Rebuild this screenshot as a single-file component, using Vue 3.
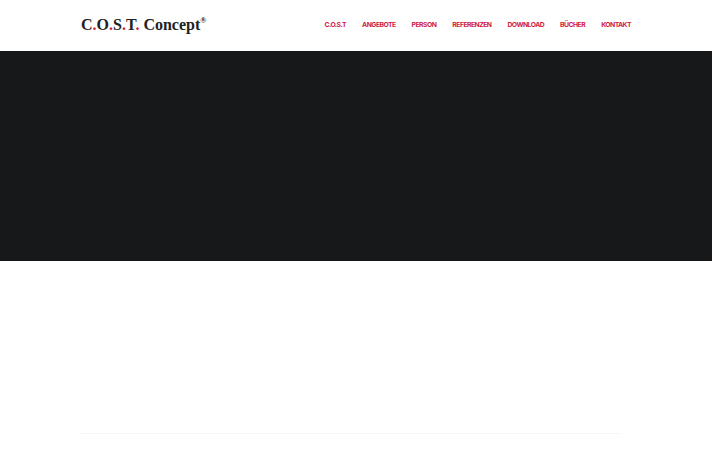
<script setup>
const links = ['C.O.S.T', 'ANGEBOTE', 'PERSON', 'REFERENZEN', 'DOWNLOAD', 'BÜCHER', 'KONTAKT']
</script>

<template>
  <div class="page">
    <header class="site-header">
      <div class="logo">
        <span>C<i>.</i>O<i>.</i>S<i>.</i>T<i>.</i> Concept</span><sup>®</sup>
      </div>
      <nav class="main-nav">
        <a v-for="link in links" :key="link" href="#">{{ link }}</a>
      </nav>
    </header>
    <section class="hero"></section>
    <section class="content">
      <div class="divider"></div>
    </section>
  </div>
</template>

<style scoped>
.page {
  width: 712px;
  height: 450px;
  overflow: hidden;
  background: #fff;
  font-family: Inter, "Liberation Sans", sans-serif;
}

.site-header {
  height: 51px;
  box-sizing: border-box;
  padding: 0 81px;
  display: flex;
  align-items: center;
  justify-content: space-between;
}

.logo {
  font-family: "Liberation Serif", serif;
  font-weight: 700;
  font-size: 16px;
  color: #222;
  white-space: nowrap;
  display: flex;
  align-items: flex-start;
  line-height: 20px;
  margin-bottom: 1px;
}

.logo i {
  font-style: normal;
  color: #c8202c;
}

.logo sup {
  font-size: 8px;
  line-height: 10px;
  margin-top: 1px;
}

.main-nav {
  display: flex;
  gap: 16px;
  margin-bottom: 1px;
}

.main-nav a {
  font-size: 6.8px;
  font-weight: 700;
  letter-spacing: -0.52px;
  color: #cf1a45;
  text-decoration: none;
  white-space: nowrap;
  line-height: 10px;
}

.hero {
  height: 210px;
  background: #17181a;
}

.content {
  height: 189px;
  box-sizing: border-box;
  padding: 172px 91px 0 80px;
}

.divider {
  height: 1px;
  background: #f6f6f6;
}
</style>
